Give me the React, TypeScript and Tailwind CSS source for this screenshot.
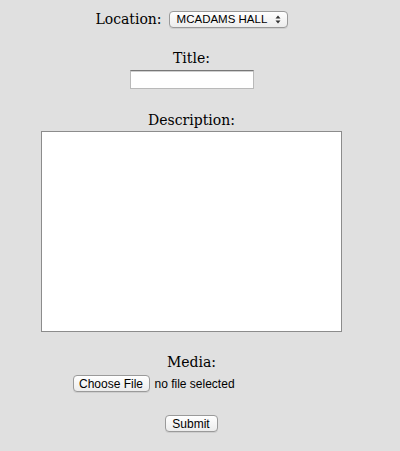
export default function App() {
  const serif = { fontFamily: '"DejaVu Serif", Georgia, serif' };
  const ui = { fontFamily: '"Liberation Sans", Arial, sans-serif' };

  return (
    <div className="min-h-[451px] w-[400px] bg-[#e0e0e0] text-black">
      <div className="flex w-[383px] flex-col items-center text-[14px] leading-[18px]" style={serif}>
        {/* location */}
        <div className="mt-[10px] flex h-[18px] items-center">
          <span>Location:</span>
          <div
            className="ml-[7px] flex h-[17px] w-[119px] items-center justify-between rounded-[4px] border border-[#9a9a9a] bg-gradient-to-b from-white to-[#ececec] pl-[7px] pr-[6px] text-[11.5px] shadow-[0_1px_0_rgba(0,0,0,0.08)]"
            style={ui}
          >
            <span>MCADAMS HALL</span>
            <svg width="6" height="9" viewBox="0 0 6 9" className="text-[#333]">
              <path d="M3 0.5 L5.5 3.5 H0.5 Z M3 8.5 L5.5 5.5 H0.5 Z" fill="currentColor" />
            </svg>
          </div>
        </div>

        {/* title */}
        <div className="mt-[21px]">Title:</div>
        <div className="mt-[3px] h-[19px] w-[124px] border border-[#b9b9b9] border-t-[#777] bg-white shadow-[inset_0_1px_0_#cfcfcf]" />

        {/* description */}
        <div className="mt-[22px]">Description:</div>
        <div className="mt-[2px] h-[201px] w-[301px] border border-[#8c8c8c] bg-white" />

        {/* media */}
        <div className="mt-[21px]">Media:</div>
        <div className="mt-[4px] flex h-[17px] w-[240px] items-center text-[12px]" style={ui}>
          <div className="ml-[1px] flex h-[17px] w-[77px] items-center justify-center rounded-[4px] border border-[#9a9a9a] bg-gradient-to-b from-white to-[#ececec] shadow-[0_1px_0_rgba(0,0,0,0.08)]">
            Choose File
          </div>
          <span className="ml-[5px]">no file selected</span>
        </div>

        {/* submit */}
        <div
          className="ml-[-1px] mt-[23px] flex h-[17px] w-[53px] items-center justify-center rounded-[4px] border border-[#9a9a9a] bg-gradient-to-b from-white to-[#ececec] text-[12px] shadow-[0_1px_0_rgba(0,0,0,0.08)]"
          style={ui}
        >
          Submit
        </div>
      </div>
    </div>
  );
}
